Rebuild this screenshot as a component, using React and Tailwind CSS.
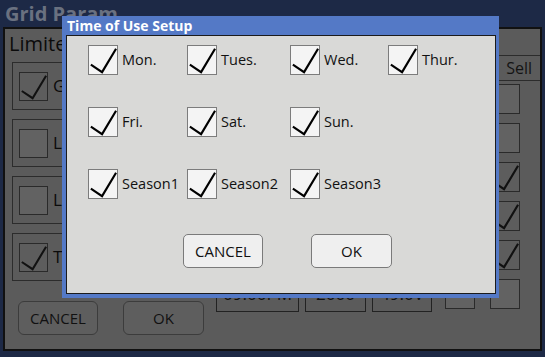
import React from 'react';

function Check({ className = '' }) {
  return (
    <svg viewBox="0 0 30 30" className={className} fill="none">
      <path d="M2 20 L14 28 L29 3" stroke="currentColor" strokeWidth="2.3" strokeLinejoin="miter" />
    </svg>
  );
}

function DimBox({ checked, className = '' }) {
  return (
    <div className={`border border-[#2a2a2a] ${checked ? 'bg-[#5d5d5d]' : 'bg-[#626262]'} text-[#111] shrink-0 ${className}`}>
      {checked && <Check className="w-full h-full" />}
    </div>
  );
}

function Option({ label, checked = true }) {
  return (
    <div className="flex items-center gap-[4px]">
      <div className="w-[30px] h-[30px] shrink-0 bg-[#f4f4f4] border border-[#7c7c7c] text-black">
        {checked && <Check className="w-full h-full" />}
      </div>
      <span className="text-[14.5px] text-[#111]">{label}</span>
    </div>
  );
}

const leftRows = [
  { label: 'Grid Sell', checked: true },
  { label: 'Limit to Load', checked: false },
  { label: 'Limit to Home', checked: false },
  { label: 'Time of Use', checked: true },
];

// only the last row's fields show below the dialog
const tableRows = [
  { a: false, b: false },
  { a: false, b: false },
  { a: false, b: true },
  { a: false, b: true },
  { a: false, b: true },
  { time: '09:00PM', power: '2000', volt: '49.0V', a: false, b: false },
];

export default function App() {
  return (
    <div
      className="relative w-[545px] h-[357px] overflow-hidden bg-[#1d2946] select-none"
      style={{ fontFamily: '"Open Sans", "Liberation Sans", sans-serif' }}
    >
      {/* dimmed background screen */}
      <div className="h-[27px] pl-[5px] text-[20px] font-bold leading-[27px] text-[#6a7180]">Grid Param</div>
      <div className="mx-[3px] h-[324px] border-2 border-[#111] bg-[#5b5b5b] flex">
        <div className="w-[207px] shrink-0 pl-[4px] flex flex-col">
          <div className="whitespace-nowrap text-[20px] leading-[28px] pt-[1px] text-[#0b0b0b]">Limiter</div>
          <div className="mt-[4px] flex flex-col gap-[9px] pl-[3px] pr-[4px]">
            {leftRows.map((r) => (
              <div key={r.label} className="h-[48px] border border-[#2c2c2c] flex items-center gap-[5px] px-[6px]">
                <DimBox checked={r.checked} className="w-[29px] h-[29px]" />
                <span className="text-[17px] text-[#0b0b0b] whitespace-nowrap">{r.label}</span>
              </div>
            ))}
          </div>
          <div className="mt-[20px] flex gap-[25px] pl-[9px]">
            <div className="w-[80px] h-[34px] rounded-[6px] border border-[#3c3c3c] bg-[#5e5e5e] flex items-center justify-center text-[15px] text-[#111]">CANCEL</div>
            <div className="w-[81px] h-[34px] rounded-[6px] border border-[#3c3c3c] bg-[#5e5e5e] flex items-center justify-center text-[15px] text-[#111]">OK</div>
          </div>
        </div>
        <div className="flex-1 flex flex-col pt-[26px] pl-[4px]">
          <div className="h-[26px] border-y border-[#2c2c2c] flex items-center justify-end pr-[8px] text-[16px] text-[#141414]">
            <span>Sell</span>
          </div>
          <div className="flex flex-col gap-[9px] pt-[3px]">
            {tableRows.map((r, i) => (
              <div key={i} className="h-[30px] flex items-center text-[17px] text-[#111]">
                <div className="w-[83px] h-[36px] border border-[#222] flex items-center justify-center">{r.time}</div>
                <div className="ml-[6px] w-[61px] h-[36px] border border-[#222] flex items-center justify-center">{r.power}</div>
                <div className="ml-[6px] w-[60px] h-[36px] border border-[#222] flex items-center justify-center">{r.volt}</div>
                <DimBox checked={r.a} className="ml-[13px] w-[30px] h-[30px]" />
                <DimBox checked={r.b} className="ml-[15px] w-[30px] h-[30px]" />
              </div>
            ))}
          </div>
        </div>
      </div>

      {/* dialog */}
      <div className="absolute left-[62px] top-[16px] w-[437px] h-[282px] bg-[#5479c6] flex flex-col pl-[4px] pr-[3px] pb-[4px]">
        <div className="h-[19px] shrink-0 pl-[1px] text-[14px] font-bold leading-[19px] text-white">Time of Use Setup</div>
        <div className="flex-1 bg-[#d9d9d7] border border-[#1b1b1b] pl-[21px] pt-[9px]">
          <div className="grid grid-cols-[99px_103px_98px_auto] gap-y-[32px] auto-rows-[30px]">
            <Option label="Mon." />
            <Option label="Tues." />
            <Option label="Wed." />
            <Option label="Thur." />
            <Option label="Fri." />
            <Option label="Sat." />
            <Option label="Sun." />
            <div />
            <Option label="Season1" />
            <Option label="Season2" />
            <Option label="Season3" />
          </div>
          <div className="mt-[35px] ml-[95px] flex gap-[48px]">
            <div className="w-[80px] h-[34px] rounded-[5px] border border-[#7a7a7a] bg-[#efefef] flex items-center justify-center text-[15px] text-[#111]">CANCEL</div>
            <div className="w-[81px] h-[34px] rounded-[5px] border border-[#7a7a7a] bg-[#efefef] flex items-center justify-center text-[15px] text-[#111]">OK</div>
          </div>
        </div>
      </div>
    </div>
  );
}
